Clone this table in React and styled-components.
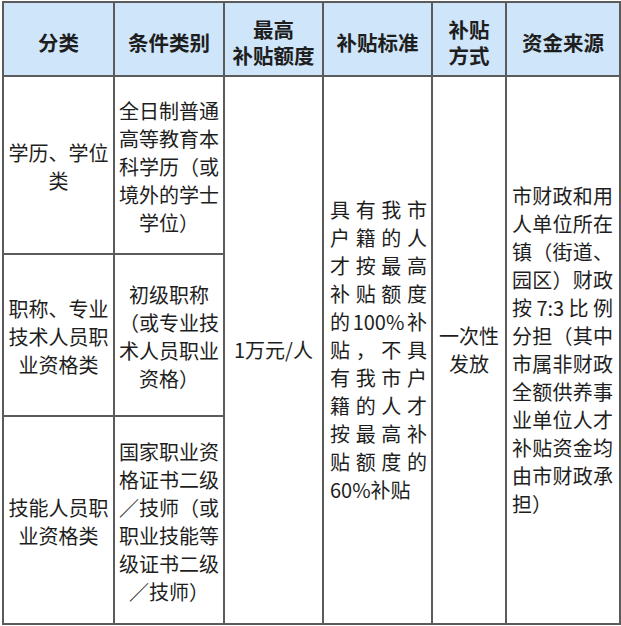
import React from 'react'
import styled, { createGlobalStyle } from 'styled-components'

const headers = [
    ['分类'],
    ['条件类别'],
    ['最高', '补贴额度'],
    ['补贴标准'],
    ['补贴', '方式'],
    ['资金来源'],
]

const rows = [
    {
        cat: ['学历、学位', '类'],
        cond: ['全日制普通', '高等教育本', '科学历（或', '境外的学士', '学位）'],
    },
    {
        cat: ['职称、专业', '技术人员职', '业资格类'],
        cond: ['初级职称', '（或专业技', '术人员职业', '资格）'],
    },
    {
        cat: ['技能人员职', '业资格类'],
        cond: ['国家职业资', '格证书二级', '／技师（或', '职业技能等', '级证书二级', '／技师）'],
    },
]

const standard = ['具有我市', '户籍的人', '才按最高', '补贴额度', '的100%补', '贴，不具', '有我市户', '籍的人才', '按最高补', '贴额度的', '60%补贴']

const source = ['市财政和用', '人单位所在', '镇（街道、', '园区）财政', '按7:3比例', '分担（其中', '市属非财政', '全额供养事', '业单位人才', '补贴资金均', '由市财政承', '担）']

function Lines({ items, justify }) {
    return (
        <Stack>
            {items.map((t, i) => (
                <Line key={i} $justify={justify && i < items.length - 1}>{t}</Line>
            ))}
        </Stack>
    )
}

function App() {
    return (
        <>
            <GlobalStyle />
            <Table>
                {headers.map((h, i) => (
                    <HeadCell key={i}><Lines items={h} /></HeadCell>
                ))}

                {rows.map((r, i) => (
                    <React.Fragment key={i}>
                        <Cell $row={i + 2} $col={1}><Lines items={r.cat} /></Cell>
                        <Cell $row={i + 2} $col={2}><Lines items={r.cond} /></Cell>
                    </React.Fragment>
                ))}

                <SpanCell $col={3}>1万元/人</SpanCell>
                <SpanCell $col={4} $left="6px" $right="4px"><Lines items={standard} justify /></SpanCell>
                <SpanCell $col={5}><Lines items={['一次性', '发放']} /></SpanCell>
                <SpanCell $col={6} $left="5px" $right="6px"><Lines items={source} justify /></SpanCell>
            </Table>
        </>
    )
}

const GlobalStyle = createGlobalStyle`
    html, body {
        margin: 0;
        padding: 0;
        background: #fff;
    }
    body {
        font-family: "Noto Sans CJK SC", "Liberation Sans", sans-serif;
        color: #1e1e1e;
    }
`

const Table = styled.div`
    display: grid;
    grid-template-columns: 111px 110px 99px 109px 74px 114px;
    grid-template-rows: 74px 178px 162px 208px;
    width: max-content;
    margin: 1px 0 0 2px;
    border-left: 2px solid #5b5b5b;
    border-top: 2px solid #5b5b5b;
`

const Base = styled.div`
    box-sizing: border-box;
    display: flex;
    align-items: center;
    justify-content: center;
    text-align: center;
    border-right: 2px solid #5b5b5b;
    border-bottom: 2px solid #5b5b5b;
`

const HeadCell = styled(Base)`
    background: #cfe5f9;
    font-size: 20.5px;
    font-weight: 700;
    line-height: 26px;
    padding-top: 6px;
`

const Cell = styled(Base)`
    grid-row: ${p => p.$row};
    grid-column: ${p => p.$col};
    font-size: 20px;
    line-height: 28px;
    padding: 3px 4px 0;
`

const SpanCell = styled(Base)`
    grid-row: 2 / span 3;
    grid-column: ${p => p.$col};
    font-size: 20px;
    line-height: 28px;
    padding: 0 ${p => p.$right || '2px'} 0 ${p => p.$left || '2px'};
`

const Stack = styled.div`
    width: 100%;
`

const Line = styled.div`
    white-space: nowrap;
    text-align: ${p => p.$justify ? 'justify' : 'inherit'};
    text-align-last: ${p => p.$justify ? 'justify' : 'auto'};
    text-justify: inter-character;
    ${p => p.$justify === false && 'text-align: left;'}
`

export default App
